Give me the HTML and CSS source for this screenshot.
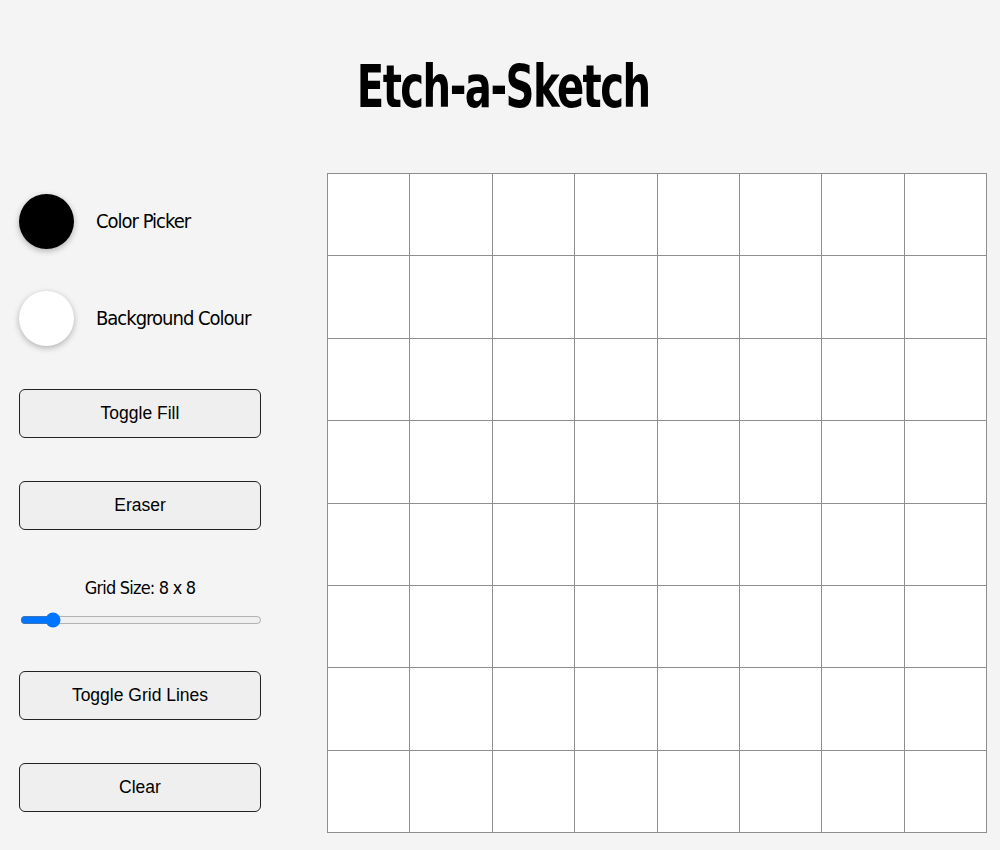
FILE: index.html
```html
<!DOCTYPE html>
<html>
<head>
<meta charset="utf-8">
<link rel="stylesheet" href="styles.css">
</head>
<body>
<header class="header">
  <h1 class="title">Etch-a-Sketch</h1>
</header>
<main class="main">
  <aside class="panel">
    <div class="picker-row">
      <span class="swatch swatch-black"></span>
      <span class="picker-label">Color Picker</span>
    </div>
    <div class="picker-row">
      <span class="swatch swatch-white"></span>
      <span class="picker-label">Background Colour</span>
    </div>
    <button class="btn btn-first">Toggle Fill</button>
    <button class="btn">Eraser</button>
    <div class="size">
      <div class="size-label">Grid Size: 8 x 8</div>
      <input class="slider" type="range" min="1" max="64" value="8">
    </div>
    <button class="btn btn-after-slider">Toggle Grid Lines</button>
    <button class="btn">Clear</button>
  </aside>
  <section class="grid" id="grid"></section>
</main>
<script>
  const g = document.getElementById('grid');
  for (let i = 0; i < 64; i++) {
    const c = document.createElement('div');
    c.className = 'cell';
    g.appendChild(c);
  }
</script>
</body>
</html>
```
FILE: styles.css
```css
html, body {
  margin: 0;
  padding: 0;
  background: #f4f4f4;
}
body {
  font-family: "DejaVu Sans", sans-serif;
  font-stretch: condensed;
  color: #000;
}
.header {
  height: 117px;
  padding-top: 57px;
  box-sizing: border-box;
  display: flex;
  justify-content: center;
  padding-left: 6px;
}
.title {
  margin: 0;
  font-size: 58px;
  line-height: 60px;
  font-weight: bold;
  letter-spacing: -2px;
  transform: scaleX(0.77);
  white-space: nowrap;
}
.main {
  display: flex;
  padding-left: 19px;
  margin-top: 56px;
}
.panel {
  width: 242px;
  padding-top: 21px;
  display: flex;
  flex-direction: column;
}
.picker-row {
  display: flex;
  align-items: center;
  height: 55px;
  margin-bottom: 42px;
  white-space: nowrap;
}
.swatch {
  width: 55px;
  height: 55px;
  border-radius: 50%;
  box-shadow: 0 2px 6px rgba(0,0,0,0.28);
  flex: none;
}
.swatch-black { background: #000; }
.swatch-white { background: #fff; }
.picker-label {
  margin-left: 22px;
  font-size: 20px;
  letter-spacing: -1px;
  margin-top: -2px;
}
.btn {
  width: 242px;
  height: 49px;
  border: 1px solid #222;
  border-radius: 6px;
  background: #efefef;
  font-family: "Liberation Sans", Arial, sans-serif;
  font-stretch: normal;
  font-size: 17.5px;
  color: #000;
  margin-bottom: 43px;
  padding: 0;
}
.btn-first { margin-top: 1px; }
.size {
  margin-top: 3px;
  display: flex;
  flex-direction: column;
  align-items: center;
}
.size-label {
  font-size: 18px;
  line-height: 24px;
  letter-spacing: -0.8px;
}
.slider {
  width: 242px;
  margin: 12px 0 0 2px;
}
.btn-after-slider { margin-top: 43px; }
.grid {
  margin-left: 66px;
  width: 660px;
  height: 660px;
  box-sizing: border-box;
  display: grid;
  grid-template-columns: repeat(8, 1fr);
  grid-template-rows: repeat(8, 1fr);
  border-top: 1px solid #8e8e8e;
  border-left: 1px solid #8e8e8e;
  background: #fff;
}
.cell {
  border-right: 1px solid #8e8e8e;
  border-bottom: 1px solid #8e8e8e;
  background: #fff;
}
```
